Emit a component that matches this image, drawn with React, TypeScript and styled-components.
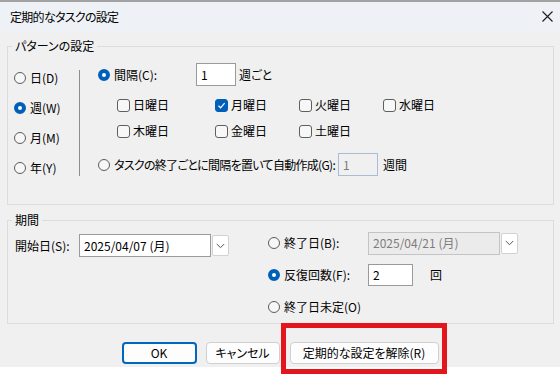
import styled, { createGlobalStyle } from 'styled-components';

const GlobalStyle = createGlobalStyle`
  html, body {
    margin: 0;
    padding: 0;
    background: #ffffff;
  }
  body {
    font-family: "Noto Sans CJK JP", "Noto Sans", sans-serif;
    font-size: 12px;
    line-height: 16px;
    color: #000;
    font-feature-settings: "palt";
  }
`;

const Screen = styled.div`
  width: 560px;
  height: 378px;
  display: flex;
  flex-direction: column;
  background: #ffffff;
  overflow: hidden;
`;

const BehindEdge = styled.div`
  height: 2px;
  background: #a2a2a2;
`;

const TitleBar = styled.div`
  height: 29px;
  background: #eef2f7;
  display: flex;
  align-items: center;
  justify-content: space-between;
  padding: 0 7px 0 10px;
`;

const Title = styled.span`
  letter-spacing: -0.7px;
`;

const Body = styled.div`
  height: 336px;
  background: #f0f0f0;
  display: flex;
  flex-direction: column;
`;

const Group = styled.fieldset<{ $top: number }>`
  margin: ${(p) => p.$top}px 6px 0 7px;
  padding: 0;
  border: 1px solid #dcdcdc;
  min-width: 0;
`;

const Legend = styled.legend`
  margin-left: 4px;
  padding: 0 3px;
  line-height: 16px;
`;

const PatternBody = styled.div`
  display: flex;
  padding: 9px 0 21px 6px;
`;

const FrequencyList = styled.div`
  width: 65px;
  display: flex;
  flex-direction: column;
`;

const FrequencyRow = styled.div`
  height: 30px;
  display: flex;
  align-items: center;
`;

const Divider = styled.div`
  width: 1px;
  height: 106px;
  margin-top: 7px;
  background: #8d8d8d;
`;

const RuleColumn = styled.div`
  margin-left: 18px;
  display: flex;
  flex-direction: column;
`;

const Row = styled.div<{ $height?: number; $top?: number }>`
  height: ${(p) => p.$height ?? 22}px;
  margin-top: ${(p) => p.$top ?? 0}px;
  display: flex;
  align-items: center;
`;

const Option = styled.label<{ $width?: number }>`
  display: flex;
  align-items: center;
  gap: 4px;
  width: ${(p) => (p.$width ? `${p.$width}px` : 'auto')};
  flex: none;
  white-space: nowrap;
`;

const RadioDot = styled.span<{ $on?: boolean }>`
  width: 12px;
  height: 12px;
  box-sizing: border-box;
  border-radius: 50%;
  flex: none;
  border: ${(p) => (p.$on ? '4px solid #005fb8' : '1px solid #5c5c5c')};
  background: ${(p) => (p.$on ? '#ffffff' : '#f7f7f7')};
`;

const Box = styled.span<{ $on?: boolean }>`
  width: 13px;
  height: 13px;
  box-sizing: border-box;
  border-radius: 3px;
  flex: none;
  display: flex;
  align-items: center;
  justify-content: center;
  border: 1px solid ${(p) => (p.$on ? '#005fb8' : '#5f5f5f')};
  background: ${(p) => (p.$on ? '#005fb8' : '#f7f7f7')};
`;

const DayGrid = styled.div`
  margin: 8px 0 0 19px;
  display: grid;
  grid-template-columns: 98px 84px 84px 84px;
  grid-auto-rows: 22px;
  row-gap: 4px;
`;

const DayOption = styled.label`
  display: flex;
  align-items: center;
  gap: 3px;
`;

const TaskText = styled.span`
  letter-spacing: -0.7px;
`;

const Field = styled.div<{ $width: number; $height?: number; $disabled?: boolean; $gap?: number }>`
  width: ${(p) => p.$width}px;
  height: ${(p) => p.$height ?? 23}px;
  margin-left: ${(p) => p.$gap ?? 0}px;
  box-sizing: border-box;
  flex: none;
  display: flex;
  align-items: center;
  padding-left: 4px;
  background: ${(p) => (p.$disabled ? '#f0f0f0' : '#ffffff')};
  border: 1px solid ${(p) => (p.$disabled ? '#a9bdd6' : '#9a9a9a')};
  color: ${(p) => (p.$disabled ? '#7a7a7a' : '#000')};
`;

const Suffix = styled.span<{ $gap: number }>`
  margin-left: ${(p) => p.$gap}px;
  white-space: nowrap;
`;

const PeriodBody = styled.div`
  display: flex;
  padding: 0 0 5px 7px;
`;

const StartPart = styled.div`
  width: 253px;
  padding-top: 6px;
`;

const FieldLabel = styled.span`
  width: 64px;
  flex: none;
  white-space: nowrap;
`;

const Combo = styled.div`
  display: flex;
  align-items: center;
  gap: 1px;
`;

const ComboText = styled.div<{ $disabled?: boolean }>`
  width: 132px;
  height: 23px;
  box-sizing: border-box;
  display: flex;
  align-items: center;
  padding-left: 4px;
  white-space: nowrap;
  background: ${(p) => (p.$disabled ? '#ebebeb' : '#ffffff')};
  border: 1px solid ${(p) => (p.$disabled ? '#c4c4c4' : '#9a9a9a')};
  color: ${(p) => (p.$disabled ? '#7d7d7d' : '#000')};
`;

const DropButton = styled.div`
  width: 17px;
  height: 21px;
  box-sizing: border-box;
  display: flex;
  align-items: center;
  justify-content: center;
  background: #ffffff;
  border: 1px solid #d2d2d2;
  border-radius: 2px;
`;

const EndPart = styled.div`
  padding-top: 4px;
  display: flex;
  flex-direction: column;
  gap: 10px;
`;

const ButtonBar = styled.div`
  margin-top: 18px;
  display: flex;
  justify-content: center;
  gap: 9px;
`;

const Button = styled.button<{ $width: number; $primary?: boolean }>`
  width: ${(p) => p.$width}px;
  height: 22px;
  box-sizing: border-box;
  padding: 0;
  font: inherit;
  color: #000;
  background: #fdfdfd;
  border-radius: 4px;
  border: ${(p) => (p.$primary ? '2px solid #0067c0' : '1px solid #d0d0d0')};
`;

const Highlight = styled.span`
  display: flex;
  margin: -19px -8px -10px -8px;
  padding: 14px 3px 5px 4px;
  border: 5px solid #e3161e;
`;

const Radio = ({ on, label, width }: { on?: boolean; label: React.ReactNode; width?: number }) => (
  <Option $width={width}>
    <RadioDot $on={on} />
    {label}
  </Option>
);

const Check = ({ on, label }: { on?: boolean; label: string }) => (
  <DayOption>
    <Box $on={on}>
      {on && (
        <svg width="9" height="9" viewBox="0 0 9 9">
          <path d="M1.5 4.8 L3.6 6.8 L7.6 2.2" fill="none" stroke="#fff" strokeWidth="1.2" />
        </svg>
      )}
    </Box>
    {label}
  </DayOption>
);

const Chevron = () => (
  <svg width="9" height="6" viewBox="0 0 9 6">
    <path d="M0.8 1 L4.5 4.7 L8.2 1" fill="none" stroke="#555" strokeWidth="1" />
  </svg>
);

const days = ['日曜日', '月曜日', '火曜日', '水曜日', '木曜日', '金曜日', '土曜日'];

const App = () => (
  <>
    <GlobalStyle />
    <Screen>
      <BehindEdge />
      <TitleBar>
        <Title>定期的なタスクの設定</Title>
        <svg width="11" height="11" viewBox="0 0 11 11">
          <path d="M0.5 0.5 L10.5 10.5 M10.5 0.5 L0.5 10.5" stroke="#1a1a1a" strokeWidth="1.1" />
        </svg>
      </TitleBar>
      <Body>
        <Group $top={7}>
          <Legend>パターンの設定</Legend>
          <PatternBody>
            <FrequencyList>
              <FrequencyRow><Radio label="日(D)" /></FrequencyRow>
              <FrequencyRow><Radio on label="週(W)" /></FrequencyRow>
              <FrequencyRow><Radio label="月(M)" /></FrequencyRow>
              <FrequencyRow><Radio label="年(Y)" /></FrequencyRow>
            </FrequencyList>
            <Divider />
            <RuleColumn>
              <Row $height={23}>
                <Radio on label="間隔(C):" width={98} />
                <Field $width={40}>1</Field>
                <Suffix $gap={3}>週ごと</Suffix>
              </Row>
              <DayGrid>
                {days.map((d) => (
                  <Check key={d} label={d} on={d === '月曜日'} />
                ))}
              </DayGrid>
              <Row $top={11} $height={23}>
                <Radio label={<TaskText>タスクの終了ごとに間隔を置いて自動作成(G):</TaskText>} />
                <Field $width={40} $gap={3} $disabled>1</Field>
                <Suffix $gap={5}>週間</Suffix>
              </Row>
            </RuleColumn>
          </PatternBody>
        </Group>
        <Group $top={7}>
          <Legend>期間</Legend>
          <PeriodBody>
            <StartPart>
              <Row $height={23}>
                <FieldLabel>開始日(S):</FieldLabel>
                <Combo>
                  <ComboText>2025/04/07 (月)</ComboText>
                  <DropButton><Chevron /></DropButton>
                </Combo>
              </Row>
            </StartPart>
            <EndPart>
              <Row>
                <Radio label="終了日(B):" width={100} />
                <Combo>
                  <ComboText $disabled>2025/04/21 (月)</ComboText>
                  <DropButton><Chevron /></DropButton>
                </Combo>
              </Row>
              <Row>
                <Radio on label="反復回数(F):" width={100} />
                <Field $width={45} $height={22}>2</Field>
                <Suffix $gap={17}>回</Suffix>
              </Row>
              <Row>
                <Radio label="終了日未定(O)" />
              </Row>
            </EndPart>
          </PeriodBody>
        </Group>
        <ButtonBar>
          <Button $width={75} $primary>OK</Button>
          <Button $width={74}>キャンセル</Button>
          <Highlight>
            <Button $width={149}>定期的な設定を解除(R)</Button>
          </Highlight>
        </ButtonBar>
      </Body>
    </Screen>
  </>
);

export default App;
